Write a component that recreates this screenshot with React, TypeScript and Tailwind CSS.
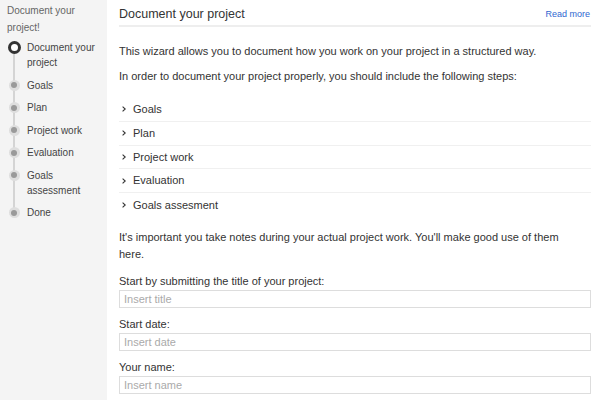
const steps = [
  { label: "Document your project", active: true },
  { label: "Goals" },
  { label: "Plan" },
  { label: "Project work" },
  { label: "Evaluation" },
  { label: "Goals assessment" },
  { label: "Done" },
];

const sections = ["Goals", "Plan", "Project work", "Evaluation", "Goals assesment"];

const fields = [
  { label: "Start by submitting the title of your project:", placeholder: "Insert title" },
  { label: "Start date:", placeholder: "Insert date" },
  { label: "Your name:", placeholder: "Insert name" },
];

function Sidebar() {
  return (
    <aside className="w-[107px] shrink-0 bg-[#f4f4f4] pl-[7px] pr-1 pt-[2px]">
      <p className="text-[10px] leading-[17px] text-[#666]">
        Document your
        <br />
        project!
      </p>

      <div className="relative mt-[4px]">
        <div className="absolute left-[6px] top-[12px] bottom-[8px] w-[2px] bg-[#d4d4d4]" />
        <ul className="relative flex flex-col gap-[7.5px]">
          {steps.map((step) => (
            <li key={step.label} className="flex items-start gap-[6px]">
              <div className="flex h-[15px] w-[14px] shrink-0 items-center justify-center">
                {step.active ? (
                  <span className="h-[13px] w-[13px] rounded-full border-[3px] border-[#333] bg-white" />
                ) : (
                  <span className="flex h-[11px] w-[11px] items-center justify-center rounded-full bg-[#dedede]">
                    <span className="h-[6px] w-[6px] rounded-full bg-[#9a9a9a]" />
                  </span>
                )}
              </div>
              <span className="text-[10px] leading-[15px] text-[#444]">{step.label}</span>
            </li>
          ))}
        </ul>
      </div>
    </aside>
  );
}

export default function App() {
  return (
    <div
      className="flex h-screen w-full overflow-hidden bg-white"
      style={{ fontFamily: '"Liberation Sans", Arial, sans-serif' }}
    >
      <Sidebar />

      <main className="flex-1 pl-3 pr-[9px] pt-[4px] text-[#333]">
        {/* Header */}
        <div className="flex h-[23px] items-center justify-between border-b-2 border-[#eee] pr-[1px]">
          <h1 className="text-[12.5px] text-[#333]">Document your project</h1>
          <a className="text-[9px] text-[#2f66d0]">Read more</a>
        </div>

        <p className="mt-[16px] text-[11px] leading-[17px]">
          This wizard allows you to document how you work on your project in a structured way.
        </p>
        <p className="mt-2 text-[11px] leading-[17px]">
          In order to document your project properly, you should include the following steps:
        </p>

        <ul className="mt-[13px]">
          {sections.map((s, i) => (
            <li
              key={s}
              className={`flex h-[23.75px] items-center text-[11px] ${
                i < sections.length - 1 ? "border-b border-[#f0f0f0]" : ""
              }`}
            >
              <span className="flex w-[14px] pl-[3px]">
                <svg width="4" height="6" viewBox="0 0 4 6" fill="none">
                  <path d="M0.6 0.6 L3.2 3 L0.6 5.4" stroke="#333" strokeWidth="1.1" />
                </svg>
              </span>
              <span>{s}</span>
            </li>
          ))}
        </ul>

        <p className="mt-[12px] max-w-[455px] text-[11px] leading-[17px]">
          It's important you take notes during your actual project work. You'll make good use of them
          here.
        </p>

        <div className="mt-[10px] flex flex-col gap-[7.5px]">
          {fields.map((f) => (
            <label key={f.label} className="flex flex-col">
              <span className="text-[11px] leading-[17px]">{f.label}</span>
              <input
                type="text"
                placeholder={f.placeholder}
                className="mt-[0.5px] h-[18px] w-full border border-[#ddd] px-[4px] text-[11px] outline-none placeholder:text-[#aaa]"
              />
            </label>
          ))}
        </div>
      </main>
    </div>
  );
}
